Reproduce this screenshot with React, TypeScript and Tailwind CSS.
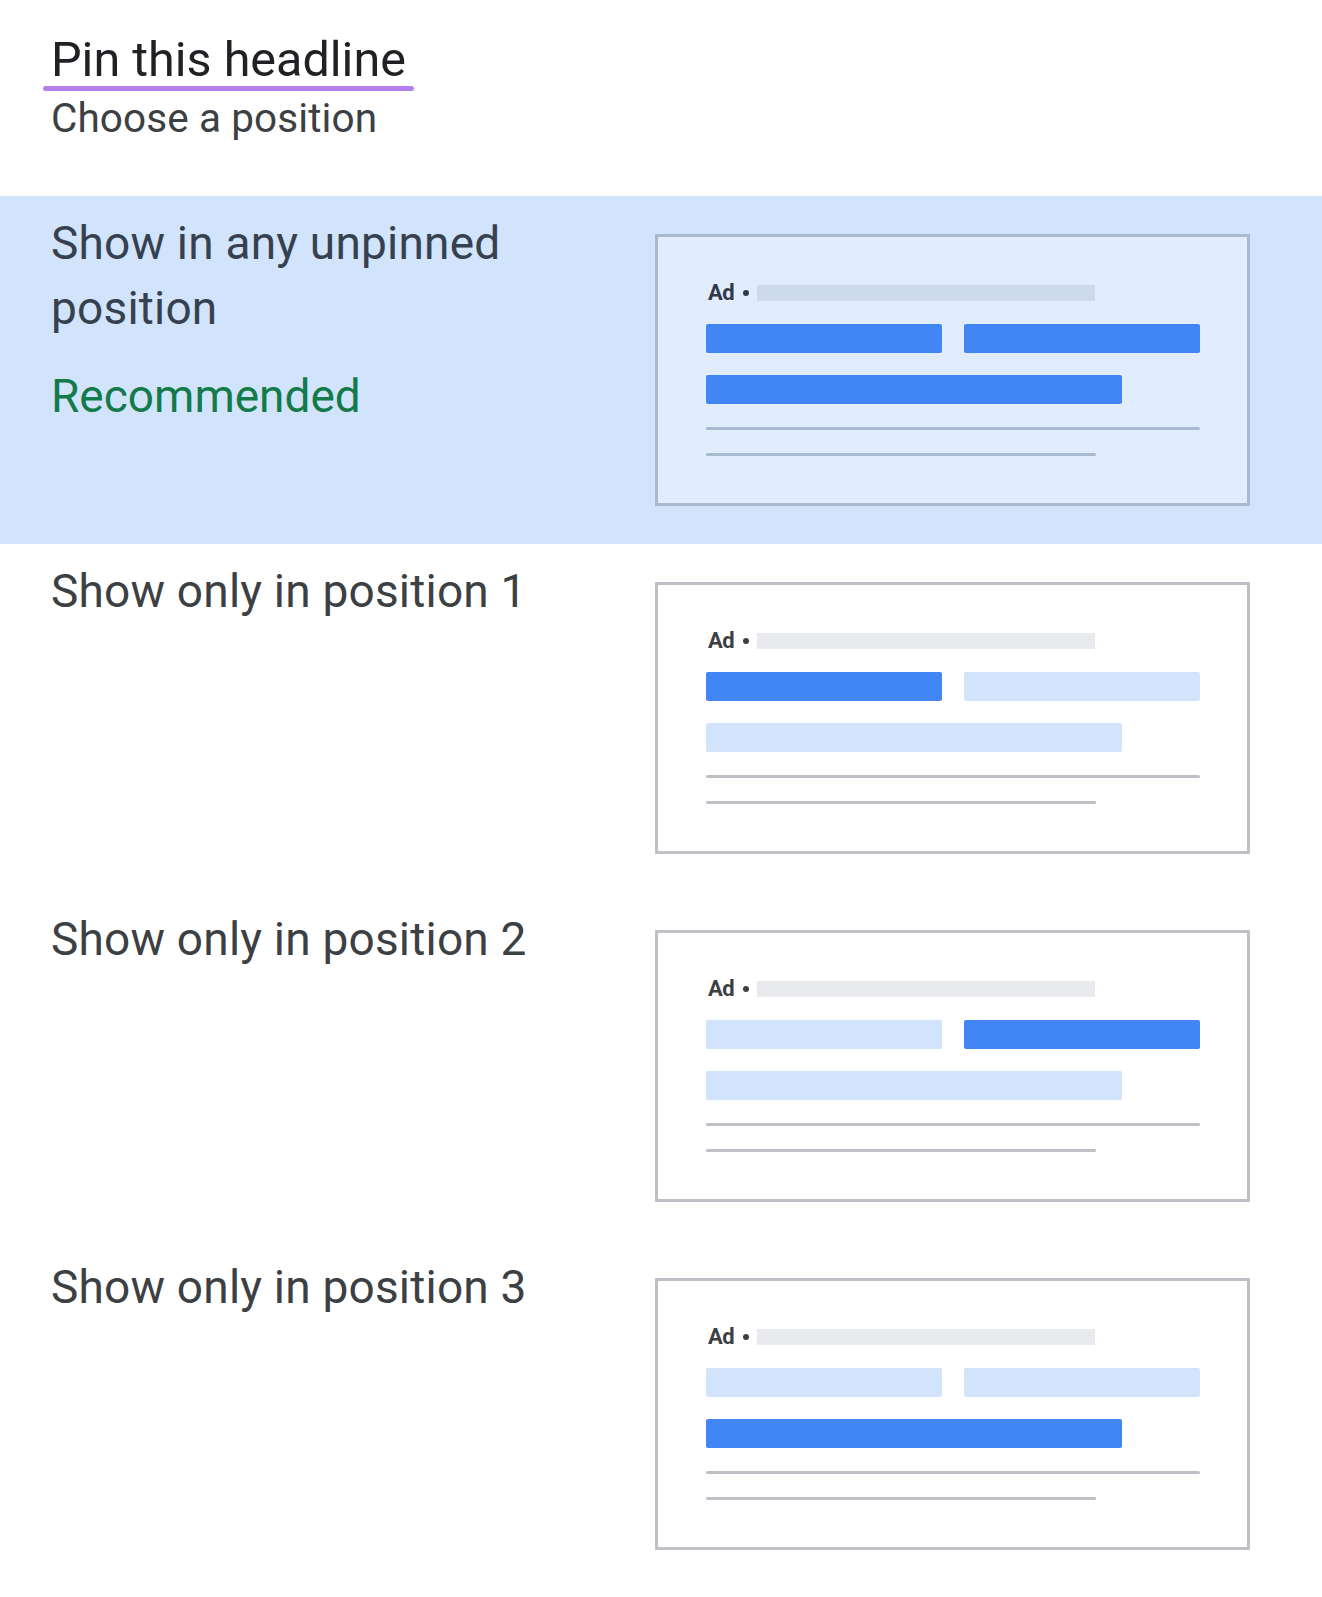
import React from 'react';

type Highlight = 'first' | 'second' | 'third' | 'all';

interface Option {
  label: string;
  highlight: Highlight;
  selected?: boolean;
  recommended?: boolean;
}

const options: Option[] = [
  { label: 'Show in any unpinned position', highlight: 'all', selected: true, recommended: true },
  { label: 'Show only in position 1', highlight: 'first' },
  { label: 'Show only in position 2', highlight: 'second' },
  { label: 'Show only in position 3', highlight: 'third' },
];

function AdPreview({ highlight, selected }: { highlight: Highlight; selected?: boolean }) {
  const on = 'bg-[#4285f4]';
  const off = 'bg-[#d2e3fc]';
  const first = highlight === 'all' || highlight === 'first' ? on : off;
  const second = highlight === 'all' || highlight === 'second' ? on : off;
  const third = highlight === 'all' || highlight === 'third' ? on : off;

  return (
    <div
      className={`mt-[38px] w-[595px] h-[272px] border-[3px] pl-[48px] pt-[48px] ${
        selected ? 'bg-[#e1ecfc] border-[#a9b9d0]' : 'bg-white border-[#bdc1c6]'
      }`}
    >
      {/* Ad label + display url */}
      <div className="flex items-center h-[16px]">
        <span
          className={`ml-[2px] text-[22px] font-bold leading-none tracking-[-0.5px] ${
            selected ? 'text-[#2f3947]' : 'text-[#3c4043]'
          }`}
        >
          Ad
        </span>
        <div className={`ml-[9px] w-[6px] h-[6px] rounded-full ${selected ? 'bg-[#2f3947]' : 'bg-[#3c4043]'}`} />
        <div className={`ml-[8px] w-[338px] h-[16px] ${selected ? 'bg-[#ccdaec]' : 'bg-[#e8eaed]'}`} />
      </div>

      {/* Headlines */}
      <div className="mt-[23px] flex gap-[22px] w-[494px]">
        <div className={`flex-1 h-[29px] rounded-[2px] ${first}`} />
        <div className={`flex-1 h-[29px] rounded-[2px] ${second}`} />
      </div>
      <div className={`mt-[22px] w-[416px] h-[29px] rounded-[2px] ${third}`} />

      {/* Description lines */}
      <div className={`mt-[23px] w-[494px] h-[3px] rounded-full ${selected ? 'bg-[#a9b9d0]' : 'bg-[#bdc1c6]'}`} />
      <div className={`mt-[23px] w-[390px] h-[3px] rounded-full ${selected ? 'bg-[#a9b9d0]' : 'bg-[#bdc1c6]'}`} />
    </div>
  );
}

export default function App() {
  return (
    <div className="min-h-screen bg-white font-['Roboto','Liberation_Sans',sans-serif]">
      {/* Header */}
      <div className="px-[43px] pt-[34px]">
        <div className="w-fit">
          <h1 className="px-[8px] text-[48.5px] leading-[52px] font-normal text-[#202124]">
            Pin this headline
          </h1>
          <div className="h-[5px] rounded-full bg-[#b57ff0]" />
        </div>
        <p className="mt-[3px] pl-[8px] text-[40.5px] leading-[48px] tracking-[0.1px] text-[#3c4043]">
          Choose a position
        </p>
      </div>

      {/* Options */}
      <div className="mt-[54px]">
        {options.map((opt) => (
          <div
            key={opt.label}
            className={`flex items-start h-[348px] ${opt.selected ? 'bg-[#d2e3fc]' : 'bg-white'}`}
          >
            <div className="w-[655px] shrink-0 pl-[51px] pt-[15px]">
              <div
                className={`w-[560px] text-[46px] leading-[65px] tracking-[0.2px] ${
                  opt.selected ? 'text-[#36414f]' : 'text-[#3c4043]'
                }`}
              >
                {opt.label}
              </div>
              {opt.recommended && (
                <div className="mt-[23px] text-[46px] leading-[65px] text-[#137a4a]">Recommended</div>
              )}
            </div>
            <AdPreview highlight={opt.highlight} selected={opt.selected} />
          </div>
        ))}
      </div>
    </div>
  );
}
